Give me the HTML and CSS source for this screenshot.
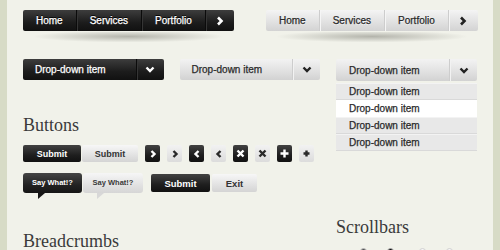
FILE: index.html
```html
<!DOCTYPE html>
<html lang="en">
<head>
  <meta charset="UTF-8">
  <title>UI Kit</title>
  <link rel="stylesheet" href="styles.css">
</head>
<body>
  <div class="page">
    <!-- Navigation bars -->
    <div class="nav-row">
      <div class="nav-wrap nav-wrap-dark">
        <ul class="nav nav-dark">
          <li>Home</li>
          <li>Services</li>
          <li>Portfolio</li>
          <li class="nav-next">
            <svg width="8" height="10" viewBox="0 0 8 10"><polyline points="2,1.5 5.5,5 2,8.5" /></svg>
          </li>
        </ul>
        <div class="nav-shadow"></div>
      </div>
      <div class="nav-wrap nav-wrap-light">
        <ul class="nav nav-light">
          <li>Home</li>
          <li>Services</li>
          <li>Portfolio</li>
          <li class="nav-next">
            <svg width="8" height="10" viewBox="0 0 8 10"><polyline points="2,1.5 5.5,5 2,8.5" /></svg>
          </li>
        </ul>
        <div class="nav-shadow"></div>
      </div>
    </div>

    <div class="main">
      <div class="col-left">
        <div class="dropdowns">
          <div class="dropdown dropdown-dark">
            <span class="dd-label">Drop-down item</span>
            <span class="dd-toggle">
              <svg width="10" height="7" viewBox="0 0 10 7"><polyline points="1.5,1.5 5,5 8.5,1.5" /></svg>
            </span>
          </div>
          <div class="dropdown dropdown-light">
            <span class="dd-label">Drop-down item</span>
            <span class="dd-toggle">
              <svg width="10" height="7" viewBox="0 0 10 7"><polyline points="1.5,1.5 5,5 8.5,1.5" /></svg>
            </span>
          </div>
        </div>

        <h2 class="section-title title-buttons">Buttons</h2>
        <div class="btn-row">
          <div class="btn-pair">
            <button class="btn btn-dark btn-submit">Submit</button>
            <button class="btn btn-light btn-submit2">Submit</button>
          </div>
          <div class="icon-btns">
            <span class="icon-btn dark"><svg width="8" height="10" viewBox="0 0 8 10"><polyline points="2.5,2 5.5,5 2.5,8" /></svg></span>
            <span class="icon-btn light"><svg width="8" height="10" viewBox="0 0 8 10"><polyline points="2.5,2 5.5,5 2.5,8" /></svg></span>
            <span class="icon-btn dark"><svg width="8" height="10" viewBox="0 0 8 10"><polyline points="5.5,2 2.5,5 5.5,8" /></svg></span>
            <span class="icon-btn light"><svg width="8" height="10" viewBox="0 0 8 10"><polyline points="5.5,2 2.5,5 5.5,8" /></svg></span>
            <span class="icon-btn dark"><svg width="9" height="9" viewBox="0 0 9 9"><path d="M1.5 1.5 L7.5 7.5 M7.5 1.5 L1.5 7.5" /></svg></span>
            <span class="icon-btn light"><svg width="9" height="9" viewBox="0 0 9 9"><path d="M1.5 1.5 L7.5 7.5 M7.5 1.5 L1.5 7.5" /></svg></span>
            <span class="icon-btn dark"><svg width="9" height="9" viewBox="0 0 9 9"><path d="M4.5 0.5 V8.5 M0.5 4.5 H8.5" /></svg></span>
            <span class="icon-btn light"><svg width="9" height="9" viewBox="0 0 9 9"><path d="M4.5 1.5 V7.5 M1.5 4.5 H7.5" /></svg></span>
          </div>
        </div>

        <div class="btn-row row-two">
          <div class="bubbles">
            <span class="bubble bubble-dark">Say What!?</span>
            <span class="bubble bubble-light">Say What!?</span>
          </div>
          <div class="btn-pair pair-big">
            <button class="btn btn-dark btn-big">Submit</button>
            <button class="btn btn-light btn-exit">Exit</button>
          </div>
        </div>

        <h2 class="section-title title-breadcrumbs">Breadcrumbs</h2>
      </div>

      <div class="col-right">
        <div class="dropdown dropdown-light dropdown-open">
          <span class="dd-label">Drop-down item</span>
          <span class="dd-toggle">
            <svg width="10" height="7" viewBox="0 0 10 7"><polyline points="1.5,1.5 5,5 8.5,1.5" /></svg>
          </span>
        </div>
        <ul class="dd-list">
          <li>Drop-down item</li>
          <li class="active">Drop-down item</li>
          <li>Drop-down item</li>
          <li>Drop-down item</li>
        </ul>

        <h2 class="section-title title-scrollbars">Scrollbars</h2>
        <div class="knobs">
          <span class="knob knob-grey"></span>
          <span class="knob knob-black"></span>
          <span class="knob knob-light gap"></span>
          <span class="knob knob-light"></span>
        </div>
      </div>
    </div>
  </div>
</body>
</html>
```

FILE: styles.css
```css
html, body {
  height: 250px;
  overflow: hidden;
}
body {
  margin: 0;
  background: #f1f2ea;
  font-family: "Liberation Sans", Arial, sans-serif;
  color: #333;
}
.page {
  width: 500px;
  min-height: 250px;
  box-sizing: border-box;
  border-left: 7px solid #d7dbc6;
  border-right: 7px solid #d7dbc6;
  padding: 10px 0 0 16px;
}

/* nav bars */
.nav-row {
  display: flex;
  gap: 32px;
  margin-bottom: 17px;
}
.nav-wrap-dark {
  width: 211px;
}
.nav-wrap-light {
  width: 212px;
}
.nav {
  display: flex;
  height: 21px;
  margin: 0;
  padding: 0;
  list-style: none;
  border-radius: 2px;
  font-size: 10px;
  -webkit-text-stroke: 0.25px currentColor;
  overflow: hidden;
}
.nav li {
  display: flex;
  align-items: center;
  padding: 0 13px;
}
.nav .nav-next {
  flex: 1;
  justify-content: center;
  padding: 0;
}
.nav svg polyline {
  fill: none;
  stroke-width: 2.6;
}
.nav-dark {
  background: linear-gradient(#3d3d3d, #1c1c1c 60%, #111);
  color: #fff;
  text-shadow: 0 -1px 0 #000;
}
.nav-dark li + li {
  border-left: 1px solid #0b0b0b;
  box-shadow: inset 1px 0 0 #353535;
}
.nav-dark svg polyline {
  stroke: #fff;
}
.nav-light {
  background: linear-gradient(#f4f4f4, #e0e0e0 60%, #d3d3d3);
  color: #2a2a2a;
  text-shadow: 0 1px 0 #f6f6f6;
}
.nav-light li + li {
  border-left: 1px solid #cdcdcd;
  box-shadow: inset 1px 0 0 #f5f5f5;
}
.nav-light svg polyline {
  stroke: #222;
}
.nav-shadow {
  height: 10px;
  margin: 1px 10px 0;
  background: radial-gradient(ellipse 50% 60% at 50% 45%, rgba(80, 80, 70, 0.38), rgba(80, 80, 70, 0) 100%);
}

/* layout */
.main {
  display: flex;
  gap: 16px;
}
.col-left {
  width: 297px;
}
.col-right {
  width: 141px;
}

/* dropdowns */
.dropdowns {
  display: flex;
  gap: 16px;
}
.dropdown {
  display: flex;
  height: 21px;
  border-radius: 2px;
  font-size: 10px;
  -webkit-text-stroke: 0.25px currentColor;
}
.dropdown-dark {
  width: 141px;
  background: linear-gradient(#3d3d3d, #1c1c1c 60%, #111);
  color: #fff;
}
.dropdown-light {
  width: 141px;
  background: linear-gradient(#f3f3f3, #e0e0e0 60%, #d2d2d2);
  color: #2a2a2a;
}
.dd-label {
  flex: 1;
  display: flex;
  align-items: center;
  padding-left: 12px;
}
.dd-toggle {
  width: 27px;
  display: flex;
  align-items: center;
  justify-content: center;
}
.dropdown-dark .dd-toggle {
  border-left: 1px solid #0b0b0b;
  box-shadow: inset 1px 0 0 #353535;
}
.dropdown-light .dd-toggle {
  border-left: 1px solid #cdcdcd;
  box-shadow: inset 1px 0 0 #f2f2f2;
}
.dd-toggle polyline {
  fill: none;
  stroke-width: 2.4;
}
.dropdown-dark polyline {
  stroke: #fff;
}
.dropdown-light polyline {
  stroke: #222;
}
.dropdown-open {
  height: 22px;
}
.dropdown-open .dd-label {
  padding-left: 13px;
}
.dd-list {
  margin: 2px 0 0;
  padding: 0;
  list-style: none;
  background: #e8e8e8;
  border-radius: 0 0 3px 3px;
  font-size: 10px;
  color: #2a2a2a;
  -webkit-text-stroke: 0.25px currentColor;
}
.dd-list li {
  height: 15px;
  line-height: 15px;
  padding-left: 13px;
  border-top: 1px solid #f3f3f3;
  border-bottom: 1px solid #d9d9d9;
}
.dd-list li.active {
  background: #fff;
  border-color: #fff;
}

/* headings */
.section-title {
  margin: 0;
  font-family: "Liberation Serif", "Times New Roman", serif;
  font-size: 18px;
  font-weight: normal;
  line-height: 20px;
  color: #3a3a3a;
}
.title-buttons {
  margin-top: 35px;
}
.title-breadcrumbs {
  margin-top: 38px;
}
.title-scrollbars {
  margin-top: 66px;
}

/* buttons */
.btn-row {
  display: flex;
  align-items: center;
  margin-top: 10px;
}
.row-two {
  margin-top: 11px;
  gap: 8px;
}
.btn-pair {
  display: flex;
  gap: 1px;
}
.pair-big {
  gap: 2px;
}
.btn {
  height: 17px;
  padding: 0;
  border: 0;
  border-radius: 2px;
  font: bold 9px "Liberation Sans", Arial, sans-serif;
}
.btn-dark {
  background: linear-gradient(#424242, #1e1e1e 60%, #111);
  color: #fff;
}
.btn-light {
  background: linear-gradient(#f7f7f7, #e2e2e2 60%, #d4d4d4);
  color: #333;
}
.btn-submit {
  width: 58px;
}
.btn-submit2 {
  width: 56px;
}
.btn-big {
  width: 59px;
  height: 18px;
  font-size: 9.5px;
}
.btn-exit {
  width: 45px;
  height: 18px;
  font-size: 9.5px;
}
.icon-btns {
  display: flex;
  gap: 7px;
  margin-left: 7px;
}
.icon-btn {
  width: 15px;
  height: 17px;
  border-radius: 2px;
  display: flex;
  align-items: center;
  justify-content: center;
}
.icon-btn svg {
  fill: none;
  stroke-width: 2.4;
}
.icon-btn.dark {
  background: linear-gradient(#424242, #1e1e1e 60%, #111);
  stroke: #fff;
}
.icon-btn.light {
  background: linear-gradient(#f2f2f2, #dcdcdc);
  stroke: #2a2a2a;
}

/* speech bubbles */
.bubbles {
  display: flex;
  gap: 1px;
}
.bubble {
  position: relative;
  height: 20px;
  line-height: 20px;
  border-radius: 3px;
  font-size: 7.5px;
  font-weight: bold;
  text-align: center;
}
.bubble::after {
  content: "";
  position: absolute;
  top: 100%;
  width: 0;
  height: 0;
  border-right: 7px solid transparent;
}
.bubble-dark {
  width: 59px;
  background: linear-gradient(#454545, #222 60%, #161616);
  color: #fff;
}
.bubble-dark::after {
  left: 15px;
  border-top: 6px solid #161616;
}
.bubble-light {
  width: 60px;
  background: linear-gradient(#f6f6f6, #e2e2e2 60%, #d6d6d6);
  color: #3a3a3a;
}
.bubble-light::after {
  left: 14px;
  border-top: 6px solid #d8d8d8;
}

/* scrollbar knobs */
.knobs {
  display: flex;
  gap: 20px;
  margin-top: 11px;
  padding-left: 24px;
}
.knob {
  width: 7px;
  height: 7px;
  border-radius: 50%;
  box-sizing: border-box;
}
.knob-grey {
  background: #555;
  border: 1px solid #bbb;
}
.knob-black {
  background: #111;
  border: 1px solid #aaa;
}
.knob-light {
  background: #f6f6f6;
  border: 1px solid #d0d0d0;
}
.knob.gap {
  margin-left: 5px;
}
```
